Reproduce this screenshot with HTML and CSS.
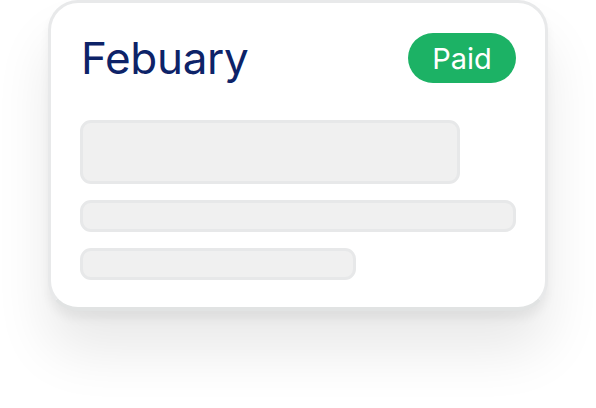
FILE: index.html
```html
<!DOCTYPE html>
<html>
<head>
<meta charset="utf-8">
<link rel="stylesheet" href="styles.css">
</head>
<body>
  <div class="stage">
    <div class="card">
      <div class="card-head">
        <h1 class="month">Febuary</h1>
        <span class="badge">Paid</span>
      </div>
      <div class="skeleton skeleton-big"></div>
      <div class="skeleton skeleton-line"></div>
      <div class="skeleton skeleton-short"></div>
    </div>
  </div>
</body>
</html>
```
FILE: styles.css
```css
html, body {
  margin: 0;
  padding: 0;
  background: #ffffff;
}
body {
  width: 596px;
  height: 408px;
  overflow: hidden;
  font-family: "Inter", "Open Sans", sans-serif;
}
.stage {
  padding-left: 48px;
}
.card {
  box-sizing: border-box;
  width: 500px;
  height: 311px;
  background: #ffffff;
  border: 3px solid #e8e9ea;
  border-bottom: 4px solid #e1e3e3;
  border-radius: 30px;
  padding: 30px 29px 0 29px;
  display: flex;
  flex-direction: column;
  box-shadow: 0 8px 10px rgba(0, 0, 0, 0.05), 0 40px 56px rgba(0, 0, 0, 0.09);
}
.card-head {
  display: flex;
  justify-content: space-between;
  align-items: center;
  height: 50px;
  margin-bottom: 37px;
}
.month {
  margin: 0 0 0 1px;
  font-weight: 400;
  font-size: 44px;
  letter-spacing: -0.3px;
  color: #0d2368;
  line-height: 1;
}
.badge {
  display: flex;
  align-items: center;
  justify-content: center;
  width: 108px;
  height: 50px;
  border-radius: 25px;
  background: #1cb265;
  color: #ffffff;
  font-size: 29px;
  line-height: 1;
}
.skeleton {
  box-sizing: border-box;
  background: #f0f0f0;
  border: 3px solid #e7e8e9;
  border-radius: 11px;
}
.skeleton-big {
  width: 380px;
  height: 64px;
  margin-bottom: 16px;
}
.skeleton-line {
  width: 436px;
  height: 32px;
  margin-bottom: 16px;
}
.skeleton-short {
  width: 276px;
  height: 32px;
}
```
